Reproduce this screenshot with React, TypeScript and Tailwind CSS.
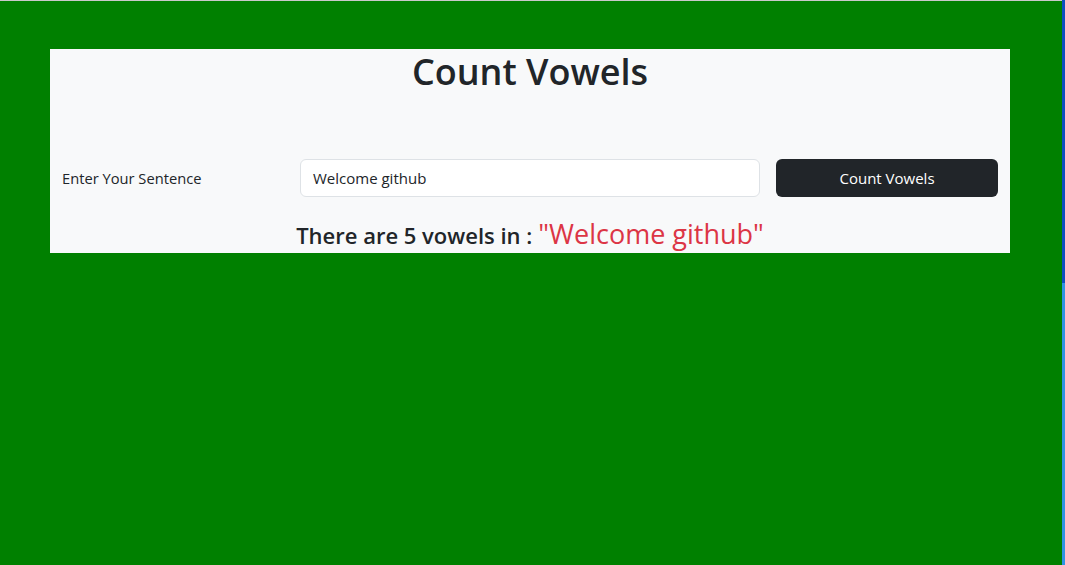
export default function App() {
  return (
    <div className="flex h-[565px] w-[1065px] overflow-hidden" style={{ fontFamily: '"Open Sans", "Noto Sans", sans-serif' }}>
      <div className="flex h-full w-[1062px] flex-col bg-[#008000]">
        <div className="h-px w-full bg-[#c9c9c9]" />
        <div className="ml-[50px] mt-[48px] flex w-[960px] flex-col bg-[#f8f9fa] text-[#212529]">
          <h1 className="text-center text-[36px] font-semibold leading-[46px]">Count Vowels</h1>
          <div className="mt-[64px] flex items-center">
            <div className="w-[250px] pl-[12px] pt-[1px] text-[14.7px]">Enter Your Sentence</div>
            <div className="flex h-[38px] w-[460px] items-center rounded-[6px] border border-[#dee2e6] bg-white px-[12px] text-[15px]">
              Welcome github
            </div>
            <button className="ml-[16px] flex h-[38px] w-[222px] items-center justify-center rounded-[6px] bg-[#212529] text-[15px] text-white">
              Count Vowels
            </button>
          </div>
          <div className="mt-[20px] flex items-baseline justify-center pb-[1px] leading-[34px]">
            <span className="text-[22px] font-semibold">There are 5 vowels in :</span>
            <span className="ml-[6px] text-[27px] text-[#dc3545]">"Welcome github"</span>
          </div>
        </div>
      </div>
      <div className="flex h-full w-[3px] flex-col">
        <div className="h-[283px] bg-[#0d4fbf]" />
        <div className="flex-1 bg-[#2f93e4]" />
      </div>
    </div>
  );
}
